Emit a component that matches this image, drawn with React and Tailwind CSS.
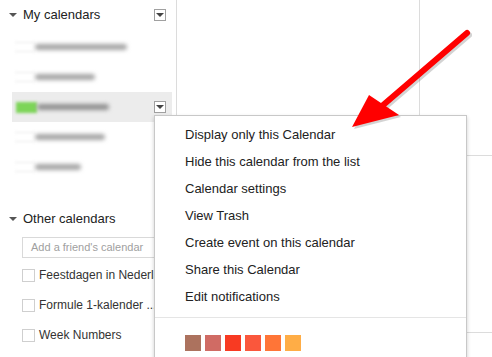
import React from "react";

function Tri({ cls = "" }) {
  return (
    <span
      className={
        "inline-block w-0 h-0 border-l-[4px] border-r-[4px] border-t-[4px] border-l-transparent border-r-transparent " +
        cls
      }
    />
  );
}

function DropBox() {
  return (
    <div className="w-[12px] h-[12px] border border-[#a0a0a0] bg-white flex items-center justify-center">
      <Tri cls="border-t-[#444]" />
    </div>
  );
}

function Check() {
  return <div className="w-[13px] h-[13px] border border-[#cfcfcf] bg-white shrink-0" />;
}

export default function App() {
  const menu = [
    "Display only this Calendar",
    "Hide this calendar from the list",
    "Calendar settings",
    "View Trash",
    "Create event on this calendar",
    "Share this Calendar",
    "Edit notifications",
  ];
  return (
    <div className="relative w-[492px] h-[357px] overflow-hidden bg-white font-['Liberation_Sans',Arial,sans-serif] text-[#222] flex">
      {/* Sidebar */}
      <div className="w-[177px] shrink-0 border-r border-[#dcdcdc] flex flex-col">
        <div className="h-[30px] flex items-center pl-[9px] pr-[10px]">
          <Tri cls="border-t-[#555] mr-[6px]" />
          <span className="text-[13px] text-[#222] flex-1">My calendars</span>
          <DropBox />
        </div>
        <div className="mt-[2px] flex flex-col">
          <div className="h-[30px] flex items-center pl-[15px]">
            <div className="w-[20px] h-[10px] border-y border-[#e8e8e8] blur-[1.5px]" />
            <div className="w-[92px] h-[6px] bg-[#a5a5a5] blur-[2px] rounded" />
          </div>
          <div className="h-[30px] flex items-center pl-[15px]">
            <div className="w-[20px] h-[10px] border-y border-[#e8e8e8] blur-[1.5px]" />
            <div className="w-[60px] h-[6px] bg-[#a5a5a5] blur-[2px] rounded" />
          </div>
          <div className="h-[30px] ml-[12px] mr-[4px] bg-[#ececec] flex items-center pl-[4px] pr-[6px]">
            <div className="w-[21px] h-[11px] bg-[#7dd558] blur-[1.5px]" />
            <div className="w-[72px] h-[6px] bg-[#8f8f8f] blur-[2px] rounded" />
            <div className="flex-1" />
            <DropBox />
          </div>
          <div className="h-[30px] flex items-center pl-[15px]">
            <div className="w-[20px] h-[10px] border-y border-[#e8e8e8] blur-[1.5px]" />
            <div className="w-[70px] h-[6px] bg-[#a5a5a5] blur-[2px] rounded" />
          </div>
          <div className="h-[30px] flex items-center pl-[15px]">
            <div className="w-[20px] h-[10px] border-y border-[#e8e8e8] blur-[1.5px]" />
            <div className="w-[46px] h-[6px] bg-[#a5a5a5] blur-[2px] rounded" />
          </div>
        </div>
        <div className="mt-[22px] h-[30px] flex items-center pl-[9px]">
          <Tri cls="border-t-[#555] mr-[6px]" />
          <span className="text-[13px] text-[#222]">Other calendars</span>
        </div>
        <div className="mt-[3px] ml-[22px] w-[160px] h-[21px] border border-[#d9d9d9] flex items-center pl-[8px] shrink-0">
          <span className="text-[11px] text-[#a0a0a0] whitespace-nowrap">Add a friend's calendar</span>
        </div>
        <div className="mt-[2px] flex flex-col">
          {["Feestdagen in Nederland", "Formule 1-kalender ...", "Week Numbers"].map((t) => (
            <div key={t} className="h-[30px] flex items-center pl-[22px] gap-[4px]">
              <Check />
              <span className="text-[12px] text-[#333] whitespace-nowrap">{t}</span>
            </div>
          ))}
        </div>
      </div>

      {/* Calendar grid */}
      <div className="flex-1 flex">
        <div className="w-[243px] border-r border-[#dcdcdc]" />
        <div className="flex-1 flex flex-col">
          <div className="h-[156px] border-b border-[#dcdcdc]" />
          <div className="h-[177px] border-b border-[#dcdcdc]" />
        </div>
      </div>

      {/* Context menu */}
      <div className="absolute left-[154px] top-[115px] w-[313px] h-[260px] bg-white border border-[#c8c8c8] shadow-[0_2px_4px_rgba(0,0,0,0.2)] pt-[5px]">
        {menu.map((m) => (
          <div key={m} className="h-[27px] flex items-center pl-[30px] text-[13px] text-[#222]">
            {m}
          </div>
        ))}
        <div className="mt-[7px] h-px bg-[#e5e5e5]" />
        <div className="mt-[17px] pl-[30px] flex gap-[4px]">
          <div className="w-[16px] h-[16px] bg-[#ac725e]" />
          <div className="w-[16px] h-[16px] bg-[#d06b64]" />
          <div className="w-[16px] h-[16px] bg-[#f83a22]" />
          <div className="w-[16px] h-[16px] bg-[#fa573c]" />
          <div className="w-[16px] h-[16px] bg-[#ff7537]" />
          <div className="w-[16px] h-[16px] bg-[#ffad46]" />
        </div>
      </div>

      {/* Red arrow */}
      <svg className="absolute left-0 top-0 pointer-events-none" width="492" height="357" viewBox="0 0 492 357">
        <g transform="translate(2,2)" opacity="0.25">
          <line x1="467" y1="33" x2="382" y2="106" stroke="#555" strokeWidth="6" strokeLinecap="round" />
          <polygon points="352,127 369,95 399,115" fill="#555" />
        </g>
        <line x1="467" y1="33" x2="382" y2="106" stroke="#ff0000" strokeWidth="6" strokeLinecap="round" />
        <polygon points="352,127 369,95 399,115" fill="#ff0000" />
      </svg>
    </div>
  );
}
